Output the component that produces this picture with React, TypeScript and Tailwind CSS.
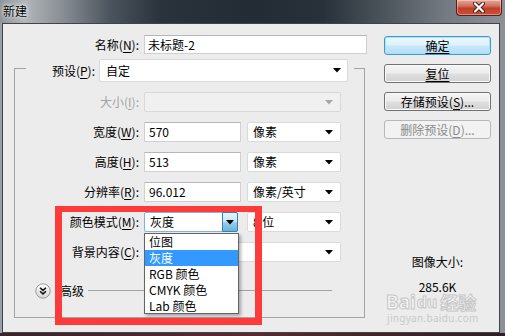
import React from "react";

const Arrow = ({ color = "#000" }: { color?: string }) => (
  <svg width="8" height="5" viewBox="0 0 8 5" className="shrink-0">
    <polygon points="0,0 8,0 4,4.5" fill={color} />
  </svg>
);

const Acc = ({ pre, k, post = "):", disabled }: { pre: string; k: string; post?: string; disabled?: boolean }) => (
  <span className={disabled ? "text-[#a3a3a3]" : "text-black"}>
    {pre}(
    <span className="underline decoration-1 underline-offset-[2px]">{k}</span>
    {post}
  </span>
);

const Label = ({ children, w }: { children: React.ReactNode; w: string }) => (
  <div className={`${w} shrink-0 text-right whitespace-nowrap`}>{children}</div>
);

const Input = ({ w, value }: { w: string; value: string }) => (
  <div
    className={`${w} h-[20px] shrink-0 bg-white border border-[#d0d0d0] border-t-[#b5b7bd] rounded-[1px] flex items-center pl-[4px] text-black`}
  >
    {value}
  </div>
);

const Combo = ({ w, text, disabled }: { w: string; text: string; disabled?: boolean }) => (
  <div
    className={`${w} h-[20px] shrink-0 rounded-[2px] border flex items-center pl-[5px] pr-[7px] ${
      disabled ? "bg-[#f0f0f0] border-[#d9d9d9]" : "bg-white border-[#dadada]"
    }`}
  >
    {text ? <span className="whitespace-nowrap">{text}</span> : null}
    <div className="ml-auto">
      <Arrow color={disabled ? "#a8a8a8" : "#000"} />
    </div>
  </div>
);

const Btn = ({
  children,
  kind = "normal",
}: {
  children: React.ReactNode;
  kind?: "normal" | "default" | "disabled";
}) => {
  const cls =
    kind === "default"
      ? "border-[#3a9bd6] bg-[linear-gradient(#eef8fe_0%,#dff2fc_45%,#c6e8fa_55%,#b3dcf3_100%)] shadow-[inset_0_0_0_1px_#a9e2f7]"
      : kind === "disabled"
      ? "border-[#b5b9bc] bg-[#f2f2f2] text-[#8a8a8a]"
      : "border-[#707070] bg-[linear-gradient(#f4f4f4_0%,#ececec_45%,#dedede_55%,#d2d2d2_100%)] shadow-[inset_0_0_0_1px_#fbfbfb]";
  return (
    <div
      className={`h-[19px] w-[107px] rounded-[3px] border ${cls} flex items-center justify-center leading-[16px] whitespace-nowrap`}
    >
      {children}
    </div>
  );
};

export default function App() {
  return (
    <div className="w-[505px] h-[336px] overflow-hidden relative bg-[linear-gradient(to_right,#3a2428,#5a2a2e,#2c2024)] font-['Noto_Sans_CJK_SC','Noto_Sans',sans-serif] text-[12px] leading-[16px] text-black">
      <div className="h-[333px] flex flex-col bg-[linear-gradient(to_right,#9aa0a6,#8c9298_50%,#8a9096)]">
        {/* Title bar */}
        <div className="h-[23px] shrink-0 flex items-start bg-[linear-gradient(to_right,#8d9399_0%,#b1b5b9_5%,#8a9096_12%,#4a525b_22%,#2a323c_32%,#232b35_50%,#283039_64%,#4c545c_76%,#737a81_88%,#8b9197_100%)]">
          <div className="pl-[3px] pt-[3px] text-[12px] leading-[16px] text-black [text-shadow:0_0_6px_#fff,0_0_3px_#fff]">
            新建
          </div>
          <div className="ml-auto mr-[3px] w-[46px] h-[16px] rounded-b-[4px] border border-t-0 border-[#5c1d14] bg-[linear-gradient(#e6a89c_0%,#d2705e_40%,#c23e26_55%,#c9513a_100%)] shadow-[inset_0_0_0_1px_rgba(255,255,255,0.35)] flex items-center justify-center">
            <svg width="14" height="11" viewBox="0 0 14 11">
              <path d="M3 1.5 L11 9.5 M11 1.5 L3 9.5" stroke="#4a1a14" strokeWidth="4" strokeLinecap="round" />
              <path d="M3 1.5 L11 9.5 M11 1.5 L3 9.5" stroke="#fff" strokeWidth="2.2" strokeLinecap="round" />
            </svg>
          </div>
        </div>

        {/* Client */}
        <div className="ml-[2px] mr-[5px] flex-1 border border-[#3f444a] bg-[#ececec] flex">
          {/* Left part */}
          <div className="w-[367px] shrink-0 flex flex-col">
            <div className="mt-[11px] flex items-center h-[19px]">
              <Label w="w-[136px]">
                <Acc pre="名称" k="N" />
              </Label>
              <div className="ml-[5px] w-[223px] h-[19px] bg-white border border-[#d0d0d0] border-t-[#b5b7bd] flex items-center pl-[3px]">
                未标题-2
              </div>
            </div>

            <fieldset className="ml-[11px] mt-[5px] w-[351px] h-[259px] border border-[#a3a3a3] px-0 pb-0">
              <legend className="ml-[11px] p-0">
                <div className="h-[23px] -mb-[5px] flex items-center pr-[6px]">
                  <Label w="w-[69px]">
                    <Acc pre="预设" k="P" />
                  </Label>
                  <div className="ml-[4px] w-[249px] h-[23px] bg-white border border-[#dadada] rounded-[2px] flex items-center pl-[6px] pr-[6px]">
                    <span>自定</span>
                    <div className="ml-auto">
                      <Arrow />
                    </div>
                  </div>
                </div>
              </legend>

              <div className="mt-[15px] flex flex-col gap-[10px]">
                <div className="flex items-center h-[20px]">
                  <Label w="w-[124px]">
                    <Acc pre="大小" k="I" disabled />
                  </Label>
                  <div className="ml-[5px]">
                    <Combo w="w-[197px]" text="" disabled />
                  </div>
                </div>

                <div className="flex items-center h-[20px]">
                  <Label w="w-[124px]">
                    <Acc pre="宽度" k="W" />
                  </Label>
                  <div className="ml-[5px] flex items-center">
                    <Input w="w-[97px]" value="570" />
                    <div className="ml-[6px]">
                      <Combo w="w-[94px]" text="像素" />
                    </div>
                  </div>
                </div>

                <div className="flex items-center h-[20px]">
                  <Label w="w-[124px]">
                    <Acc pre="高度" k="H" />
                  </Label>
                  <div className="ml-[5px] flex items-center">
                    <Input w="w-[97px]" value="513" />
                    <div className="ml-[6px]">
                      <Combo w="w-[94px]" text="像素" />
                    </div>
                  </div>
                </div>

                <div className="flex items-center h-[20px]">
                  <Label w="w-[124px]">
                    <Acc pre="分辨率" k="R" />
                  </Label>
                  <div className="ml-[5px] flex items-center">
                    <Input w="w-[97px]" value="96.012" />
                    <div className="ml-[6px]">
                      <Combo w="w-[94px]" text="像素/英寸" />
                    </div>
                  </div>
                </div>

                <div className="flex items-center h-[20px]">
                  <Label w="w-[124px]">
                    <Acc pre="颜色模式" k="M" />
                  </Label>
                  <div className="ml-[5px] flex items-center">
                    <div className="w-[94px] h-[20px] bg-white border border-[#7eb4ea] rounded-[2px] flex items-center pl-[5px]">
                      <span>灰度</span>
                      <div className="ml-auto w-[16px] h-[20px] -my-px -mr-px rounded-r-[2px] border border-[#3c7fb1] bg-[linear-gradient(#e5f4fc_0%,#c4e5f6_50%,#98d1ef_51%,#68b3db_100%)] flex items-center justify-center">
                        <Arrow />
                      </div>
                    </div>
                    <div className="ml-[9px]">
                      <Combo w="w-[94px]" text="8 位" />
                    </div>
                  </div>
                </div>

                <div className="flex items-center h-[20px]">
                  <Label w="w-[124px]">
                    <Acc pre="背景内容" k="C" />
                  </Label>
                  <div className="ml-[5px]">
                    <Combo w="w-[197px]" text="" />
                  </div>
                </div>

                <div className="mt-[11px] flex items-center h-[15px]">
                  <div className="ml-[20px] w-[16px] h-[16px] shrink-0">
                    <svg width="16" height="16" viewBox="0 0 16 16">
                      <defs>
                        <linearGradient id="cg" x1="0" y1="0" x2="0" y2="1">
                          <stop offset="0" stopColor="#ffffff" />
                          <stop offset="1" stopColor="#d6d6d6" />
                        </linearGradient>
                      </defs>
                      <circle cx="8" cy="8" r="7.2" fill="url(#cg)" stroke="#8e8e8e" strokeWidth="0.9" />
                      <path d="M5 4.8 L8 7.4 L11 4.8 M5 8.3 L8 10.9 L11 8.3" fill="none" stroke="#111" strokeWidth="1.5" />
                    </svg>
                  </div>
                  <span className="ml-[9px]">高级</span>
                  <div className="ml-[4px] mr-[32px] flex-1 h-px bg-[#a3a3a3]" />
                </div>
              </div>
            </fieldset>
          </div>

          {/* Right part */}
          <div className="ml-[14px] w-[107px] flex flex-col items-center">
            <div className="mt-[12px] flex flex-col gap-[9px]">
              <Btn kind="default">
                <span className="underline decoration-1 underline-offset-[2px]">确定</span>
              </Btn>
              <Btn>
                <span className="underline decoration-1 underline-offset-[2px]">复位</span>
              </Btn>
              <Btn>
                <Acc pre="存储预设" k="S" post=")..." />
              </Btn>
              <Btn kind="disabled">
                <span className="text-[#8a8a8a]">
                  删除预设(<span className="underline decoration-1 underline-offset-[2px]">D</span>)...
                </span>
              </Btn>
            </div>
            <div className="mt-[115px] text-center">图像大小:</div>
            <div className="mt-[10px] text-center leading-[14px]">285.6K</div>
          </div>
        </div>
      </div>

      {/* Baidu watermark */}
      <div className="absolute left-[386px] top-[294px] flex items-center text-[19px] leading-[16px] font-bold text-[rgba(255,255,255,0.55)] [-webkit-text-stroke:1px_#c6c6c6] font-['Noto_Sans',sans-serif]">
        <span>Bai</span>
        <span className="ml-[1px] text-[16px]">du</span>
        <span className="ml-[3px] font-['Noto_Sans_CJK_SC',sans-serif] text-[18px]">经验</span>
      </div>
      <div className="absolute left-[387px] top-[312px] text-[10px] leading-[12px] text-[#c9c9c9] font-['Noto_Sans',sans-serif] tracking-[0.3px]">
        jingyan.baidu.com
      </div>

      {/* Dropdown list */}
      <div className="absolute left-[144px] top-[233px] w-[95px] h-[81px] bg-white border border-[#646464] shadow-[2px_2px_3px_rgba(0,0,0,0.3)] flex flex-col">
        <div className="h-[16px] pl-[4px] leading-[16px]">位图</div>
        <div className="h-[16px] pl-[4px] leading-[16px] bg-[#3399ff] text-white">灰度</div>
        <div className="h-[16px] pl-[4px] leading-[16px]">RGB 颜色</div>
        <div className="h-[16px] pl-[4px] leading-[16px]">CMYK 颜色</div>
        <div className="h-[16px] pl-[4px] leading-[16px]">Lab 颜色</div>
      </div>

      {/* Red annotation rectangle */}
      <div className="absolute left-[55px] top-[206px] w-[207px] h-[119px] border-[7px] border-t-[6px] border-[#fe3b3b]" />
    </div>
  );
}
